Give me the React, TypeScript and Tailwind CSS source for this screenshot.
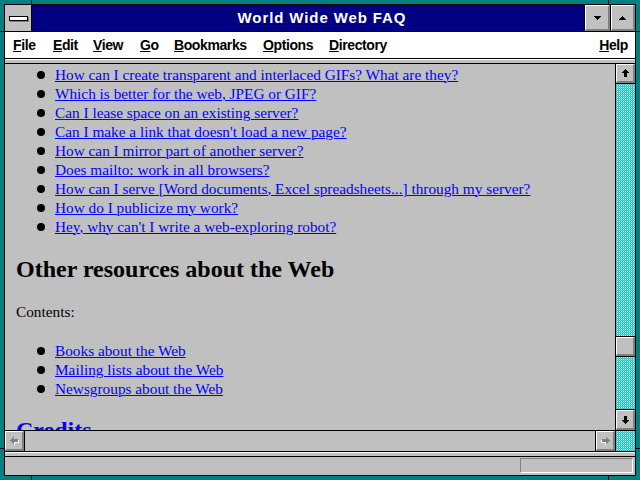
import React from "react";

const raised =
  "bg-[#c0c0c0] border-t border-l border-r-2 border-b-2 border-t-white border-l-white border-r-[#808080] border-b-[#808080]";

// dy shifts the pattern so every dithered strip keeps the same screen phase
function Dither({ id, w, h, dy }: { id: string; w: number; h: number; dy: number }) {
  return (
    <svg width={w} height={h} viewBox={`0 0 ${w} ${h}`} className="block">
      <defs>
        <pattern id={id} x="0" y={dy} width="2" height="2" patternUnits="userSpaceOnUse">
          <rect x="0" y="0" width="2" height="2" fill="#20c4c4" />
          <rect x="1" y="0" width="1" height="1" fill="#e8f8f8" />
          <rect x="0" y="1" width="1" height="1" fill="#80c8c8" />
        </pattern>
      </defs>
      <rect x="0" y="0" width={w} height={h} fill={`url(#${id})`} />
    </svg>
  );
}

function ArrowV({ up }: { up: boolean }) {
  return (
    <svg width="7" height="8" viewBox="0 0 7 8" shapeRendering="crispEdges" className={up ? "" : "rotate-180"}>
      <polygon points="3.5,0 7,4 5,4 5,8 2,8 2,4 0,4" fill="#000" />
    </svg>
  );
}

function ArrowH({ left }: { left: boolean }) {
  return (
    <svg width="9" height="8" viewBox="0 0 9 8" shapeRendering="crispEdges" className={left ? "" : "-scale-x-100"}>
      <polygon points="1,4.5 5,1 5,3 9,3 9,6 5,6 5,8" fill="#fff" />
      <polygon points="0,3.5 4,0 4,2 8,2 8,5 4,5 4,7" fill="#808080" />
    </svg>
  );
}

function Tri({ up }: { up: boolean }) {
  return (
    <svg width="7" height="4" viewBox="0 0 7 4" shapeRendering="crispEdges">
      <polygon points={up ? "3.5,0 7,4 0,4" : "0,0 7,0 3.5,4"} fill="#000" />
    </svg>
  );
}

const menus = [
  { k: "F", rest: "ile", w: "w-[40px]" },
  { k: "E", rest: "dit", w: "w-[40px]" },
  { k: "V", rest: "iew", w: "w-[47px]" },
  { k: "G", rest: "o", w: "w-[34px]" },
  { k: "B", rest: "ookmarks", w: "w-[89px]" },
  { k: "O", rest: "ptions", w: "w-[66px]" },
  { k: "D", rest: "irectory", w: "" },
];

const faq = [
  "How can I create transparent and interlaced GIFs? What are they?",
  "Which is better for the web, JPEG or GIF?",
  "Can I lease space on an existing server?",
  "Can I make a link that doesn't load a new page?",
  "How can I mirror part of another server?",
  "Does mailto: work in all browsers?",
  "How can I serve [Word documents, Excel spreadsheets...] through my server?",
  "How do I publicize my work?",
  "Hey, why can't I write a web-exploring robot?",
];

const resources = ["Books about the Web", "Mailing lists about the Web", "Newsgroups about the Web"];

function Item({ text }: { text: string }) {
  return (
    <li className="flex items-center pl-[21px] gap-[10px]">
      <span className="w-[8px] h-[8px] rounded-full bg-black shrink-0" />
      <a className="text-[#0000ff] underline decoration-1 whitespace-nowrap">{text}</a>
    </li>
  );
}

export default function App() {
  return (
    <div className="relative w-[640px] h-[480px] bg-[#008080] p-[4px] font-['Liberation_Sans',Arial,sans-serif]">
      <div className="absolute left-[31px] top-0 w-px h-[4px] bg-black" />
      <div className="absolute left-[608px] top-0 w-px h-[4px] bg-black" />
      <div className="absolute left-[31px] bottom-0 w-px h-[4px] bg-black" />
      <div className="absolute left-[608px] bottom-0 w-px h-[4px] bg-black" />
      <div className="absolute left-0 top-[31px] w-[4px] h-px bg-black" />
      <div className="absolute left-0 top-[448px] w-[4px] h-px bg-black" />
      <div className="absolute right-0 top-[31px] w-[4px] h-px bg-black" />
      <div className="absolute right-0 top-[448px] w-[4px] h-px bg-black" />

      <div className="flex flex-col w-[632px] h-[472px] border border-black bg-[#c0c0c0]">
        {/* title bar */}
        <div className="flex h-[27px] shrink-0 border-b border-black">
          <div className="w-[27px] border-r border-black bg-[#c0c0c0] flex items-center justify-center">
            <div className="w-[19px] h-[5px] bg-white border border-black shadow-[1px_1px_0_#808080]" />
          </div>
          <div className="flex-1 bg-[#000080] text-white font-bold text-[15px] tracking-[0.9px] leading-[26px] text-center pl-[28px]">
            World Wide Web FAQ
          </div>
          <div className="w-[26px] border-l border-black">
            <div className={`${raised} w-full h-full flex items-center justify-center`}>
              <Tri up={false} />
            </div>
          </div>
          <div className="w-[25px] border-l border-black">
            <div className={`${raised} w-full h-full flex items-center justify-center`}>
              <Tri up={true} />
            </div>
          </div>
        </div>

        {/* menu bar */}
        <div className="flex items-center h-[27px] shrink-0 bg-white border-b border-black pl-[8px] pr-[7px] text-[14px] font-bold tracking-[-0.4px] leading-[26px] text-black">
          {menus.map((m) => (
            <span key={m.k} className={m.w}>
              <span className="underline">{m.k}</span>
              {m.rest}
            </span>
          ))}
          <span className="ml-auto">
            <span className="underline">H</span>elp
          </span>
        </div>

        <div className="h-[5px] shrink-0 border-t border-t-white border-b border-b-black bg-[#c0c0c0]" />

        {/* page + vertical scrollbar */}
        <div className="flex h-[366px] shrink-0">
          <div className="flex-1 overflow-hidden pl-[11px] pt-[1px] font-['Liberation_Serif','Times_New_Roman',serif] text-[15.3px] leading-[19px] text-black">
            <ul>
              {faq.map((t) => (
                <Item key={t} text={t} />
              ))}
            </ul>
            <h2 className="mt-[19px] text-[24px] leading-[28px] font-bold">Other resources about the Web</h2>
            <p className="mt-[19px]">Contents:</p>
            <ul className="mt-[20px]">
              {resources.map((t) => (
                <Item key={t} text={t} />
              ))}
            </ul>
            <h2 className="mt-[18px] text-[24px] leading-[28px] font-bold text-[#0000ff]">
              <a className="underline">Credits</a>
            </h2>
          </div>
          <div className="w-[20px] border-l border-black flex flex-col">
            <div className="h-[20px] border-b border-black">
              <div className={`${raised} w-full h-full flex items-center justify-center`}>
                <ArrowV up={true} />
              </div>
            </div>
            <Dither id="vs1" w={19} h={252} dy={1} />
            <div className="h-[21px] border-y border-black">
              <div className={`${raised} w-full h-full`} />
            </div>
            <Dither id="vs2" w={19} h={52} dy={0} />
            <div className="h-[21px] border-t border-black">
              <div className={`${raised} w-full h-full flex items-center justify-center`}>
                <ArrowV up={false} />
              </div>
            </div>
          </div>
        </div>

        {/* horizontal scrollbar */}
        <div className="flex h-[22px] shrink-0 border-y border-black">
          <div className="w-[20px] border-r border-black">
            <div className={`${raised} w-full h-full flex items-center justify-center`}>
              <ArrowH left={true} />
            </div>
          </div>
          <div className="flex-1 bg-[#c0c0c0]" />
          <div className="w-[20px] border-l border-black">
            <div className={`${raised} w-full h-full flex items-center justify-center`}>
              <ArrowH left={false} />
            </div>
          </div>
          <div className="w-[20px] border-l border-black">
            <Dither id="corner" w={19} h={20} dy={0} />
          </div>
        </div>

        <div className="h-[5px] shrink-0 border-t border-t-white border-b border-b-black bg-[#c0c0c0]" />

        {/* status bar */}
        <div className="flex-1 flex items-start pt-[1px] pr-[2px]">
          <div className="ml-auto w-[113px] h-[15px] border border-t-[#808080] border-l-[#808080] border-b-white border-r-white" />
        </div>
      </div>
    </div>
  );
}
